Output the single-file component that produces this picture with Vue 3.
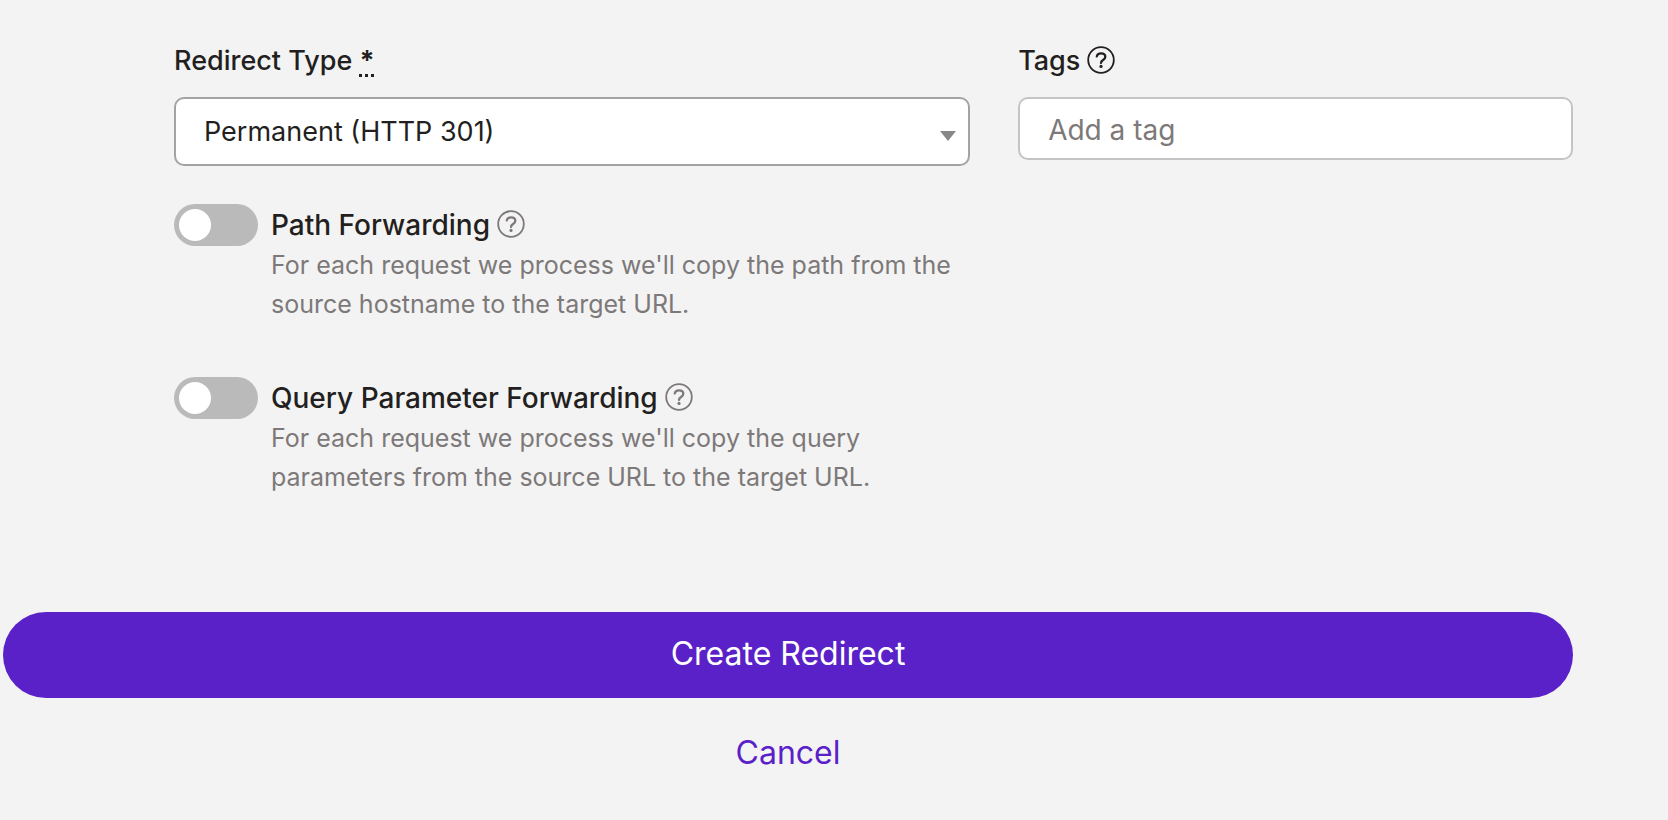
<script setup>
import { ref } from 'vue'

const redirectType = ref('301')
const tag = ref('')
const options = ref([
  {
    id: 'path-forwarding',
    label: 'Path Forwarding',
    description: "For each request we process we'll copy the path from the source hostname to the target URL.",
    enabled: false,
  },
  {
    id: 'query-forwarding',
    label: 'Query Parameter Forwarding',
    description: "For each request we process we'll copy the query parameters from the source URL to the target URL.",
    enabled: false,
  },
])
</script>

<template>
  <form class="redirect-form" @submit.prevent>
    <div class="fields">
      <div class="column">
        <label class="label" for="redirect-type">Redirect Type <abbr title="required">*</abbr></label>
        <div class="select-wrap">
          <select id="redirect-type" v-model="redirectType" class="control select">
            <option value="301">Permanent (HTTP 301)</option>
            <option value="302">Temporary (HTTP 302)</option>
          </select>
          <svg class="arrow" viewBox="0 0 16 10" aria-hidden="true"><path d="M0 0h16L8 10z" /></svg>
        </div>

        <div class="options">
          <div v-for="option in options" :key="option.id" class="option">
            <input :id="option.id" v-model="option.enabled" class="toggle" type="checkbox" role="switch" />
            <div>
              <div class="option-title">
                <label class="option-label" :for="option.id">{{ option.label }}</label>
                <svg class="help muted" viewBox="0 0 28 28" aria-hidden="true">
                  <circle cx="14" cy="14" r="12.8" />
                  <path class="mark" d="M9.8 10.4C10.2 8.3 11.800 7.300 14 7.300c2.600 0 4.300 1.400 4.300 3.400 0 1.600-.9 2.400-2.200 3.200-1.500.9-2.100 1.500-2.100 3" />
                  <circle class="dot" cx="14" cy="20.400" r="1.600" />
                </svg>
              </div>
              <p class="description">{{ option.description }}</p>
            </div>
          </div>
        </div>
      </div>

      <div class="column">
        <div class="label-row">
          <label class="label" for="tags">Tags</label>
          <svg class="help" viewBox="0 0 28 28" aria-hidden="true">
            <circle cx="14" cy="14" r="12.8" />
            <path class="mark" d="M9.8 10.4C10.2 8.3 11.8 7.3 14 7.3c2.6 0 4.3 1.4 4.3 3.4 0 1.6-.9 2.4-2.2 3.2-1.5.9-2.1 1.5-2.1 3" />
            <circle class="dot" cx="14" cy="20.4" r="1.6" />
          </svg>
        </div>
        <input id="tags" v-model="tag" class="control tags" type="text" placeholder="Add a tag" />
      </div>
    </div>

    <div class="actions">
      <button class="submit" type="submit">Create Redirect</button>
      <a class="cancel" href="#">Cancel</a>
    </div>
  </form>
</template>

<style>
body {
  background: #f3f3f3;
}
</style>

<style scoped>
.redirect-form {
  box-sizing: border-box;
  padding: 40px 95px 40px 3px;
  color: #231f20;
  font-family: Inter, "Liberation Sans", sans-serif;
  font-size: 27px;
}

.fields {
  display: grid;
  grid-template-columns: 33fr 23fr;
  gap: 48px;
  padding-left: 171px;
}

.column {
  min-width: 0;
}

.label,
.option-label {
  font-weight: 500;
  line-height: 42px;
}

.label {
  display: block;
}

.option-label {
  font-size: 28px;
}

.label abbr {
  font-weight: 700;
  text-decoration: underline dotted 3px;
  text-underline-offset: 4px;
}

.label-row,
.option-title {
  display: flex;
  align-items: center;
  gap: 7px;
}

.option-title {
  height: 42px;
}

.help {
  width: 28px;
  height: 28px;
  margin-bottom: 2px;
  fill: none;
  stroke: #231f20;
  stroke-width: 1.8;
}

.help .mark {
  stroke-width: 2.3;
  stroke-linecap: round;
}

.help .dot {
  fill: #231f20;
  stroke: none;
}

.help.muted {
  stroke: #7d7979;
}

.help.muted .dot {
  fill: #7d7979;
}

.control {
  box-sizing: border-box;
  display: block;
  width: 100%;
  margin: 0;
  padding: 0 28px;
  border: 2px solid #c4c4c4;
  border-radius: 10px;
  background: #fff;
  color: inherit;
  font: inherit;
  appearance: none;
}

.select-wrap {
  position: relative;
  margin-top: 15px;
}

.select {
  height: 69px;
  border-color: #a3a3a3;
}

.arrow {
  position: absolute;
  top: 34px;
  right: 14px;
  width: 16px;
  height: 10px;
  fill: #888;
  pointer-events: none;
}

.tags {
  height: 63px;
  margin-top: 15px;
  padding-top: 2px;
  font-size: 28px;
}

.tags::placeholder {
  color: #7d7979;
  opacity: 1;
}

.options {
  display: grid;
  gap: 53px;
  margin-top: 38px;
}

.option {
  display: grid;
  grid-template-columns: 84px 1fr;
  gap: 13px;
  align-items: start;
}

.toggle {
  display: flex;
  align-items: center;
  box-sizing: border-box;
  width: 84px;
  height: 42px;
  margin: 0;
  padding: 5px;
  border-radius: 21px;
  background: #bababa;
  appearance: none;
}

.toggle::before {
  width: 32px;
  height: 32px;
  border-radius: 50%;
  background: #fff;
  content: "";
}

.toggle:checked {
  justify-content: flex-end;
  background: #5a21c8;
}

.description {
  margin: 0;
  color: #7d7979;
  font-size: 25px;
  line-height: 39px;
}

.actions {
  display: flex;
  flex-direction: column;
  align-items: center;
  gap: 34px;
  margin-top: 115px;
}

.submit {
  width: 100%;
  height: 86px;
  padding: 0 0 4px;
  border: 0;
  border-radius: 43px;
  background: #5a21c8;
  color: #fff;
  font: inherit;
  font-size: 32px;
}

.cancel {
  color: #5a21c8;
  font-size: 32px;
  line-height: 42px;
  text-decoration: none;
}
</style>
